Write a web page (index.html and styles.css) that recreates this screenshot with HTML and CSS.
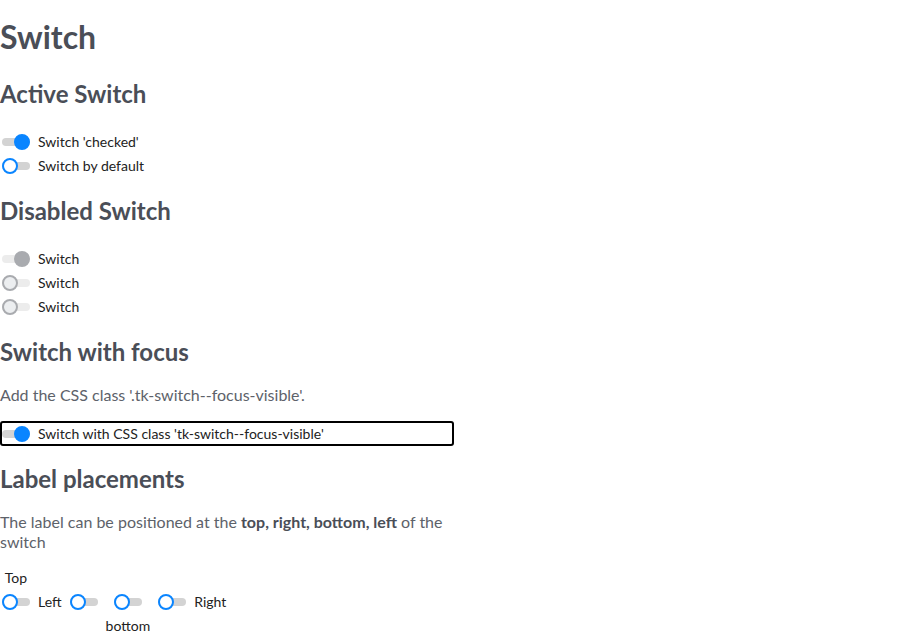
FILE: index.html
```html
<!DOCTYPE html>
<html lang="en">
<head>
<meta charset="utf-8">
<title>Switch</title>
<link rel="stylesheet" href="styles.css">
</head>
<body>
<main class="page">
  <h1 class="title">Switch</h1>

  <h2 class="section-title">Active Switch</h2>
  <div class="switch-list">
    <label class="switch-row">
      <span class="switch switch--checked"><span class="switch__track"></span><span class="switch__thumb"></span></span>
      <span class="switch__label">Switch 'checked'</span>
    </label>
    <label class="switch-row">
      <span class="switch"><span class="switch__track"></span><span class="switch__thumb"></span></span>
      <span class="switch__label">Switch by default</span>
    </label>
  </div>

  <h2 class="section-title">Disabled Switch</h2>
  <div class="switch-list">
    <label class="switch-row">
      <span class="switch switch--checked switch--disabled"><span class="switch__track"></span><span class="switch__thumb"></span></span>
      <span class="switch__label">Switch</span>
    </label>
    <label class="switch-row">
      <span class="switch switch--disabled"><span class="switch__track"></span><span class="switch__thumb"></span></span>
      <span class="switch__label">Switch</span>
    </label>
    <label class="switch-row">
      <span class="switch switch--disabled"><span class="switch__track"></span><span class="switch__thumb"></span></span>
      <span class="switch__label">Switch</span>
    </label>
  </div>

  <h2 class="section-title">Switch with focus</h2>
  <p class="text">Add the CSS class '.tk-switch--focus-visible'.</p>
  <label class="switch-row switch-row--focus">
    <span class="switch switch--checked"><span class="switch__track"></span><span class="switch__thumb"></span></span>
    <span class="switch__label">Switch with CSS class 'tk-switch--focus-visible'</span>
  </label>

  <h2 class="section-title">Label placements</h2>
  <p class="text text--wrap">The label can be positioned at the <strong>top, right, bottom, left</strong> of the switch</p>

  <div class="placements">
    <label class="placement placement--top">
      <span class="switch__label">Top</span>
      <span class="switch"><span class="switch__track"></span><span class="switch__thumb"></span></span>
    </label>
    <label class="placement placement--left">
      <span class="switch__label">Left</span>
      <span class="switch"><span class="switch__track"></span><span class="switch__thumb"></span></span>
    </label>
    <label class="placement placement--bottom">
      <span class="switch"><span class="switch__track"></span><span class="switch__thumb"></span></span>
      <span class="switch__label">bottom</span>
    </label>
    <label class="placement placement--right">
      <span class="switch"><span class="switch__track"></span><span class="switch__thumb"></span></span>
      <span class="switch__label">Right</span>
    </label>
  </div>
</main>
</body>
</html>
```

FILE: styles.css
```css
html, body {
  margin: 0;
  padding: 0;
  background: #ffffff;
}

body {
  font-family: Lato, "Open Sans", "Liberation Sans", sans-serif;
  color: #222222;
}

.page {
  width: 454px;
}

.title {
  margin: 18px 0 23px;
  font-size: 32px;
  line-height: 38px;
  font-weight: 700;
  color: #4a4e57;
}

.section-title {
  margin: 18px 0 22px;
  font-size: 24px;
  line-height: 29px;
  font-weight: 700;
  color: #4a4e57;
}

.text {
  margin: -3px 0 16px;
  font-size: 16px;
  line-height: 20px;
  color: #5d626a;
}

.text strong {
  font-weight: 700;
  color: #4a4e57;
}

.text--wrap {
  margin-bottom: 18px;
}

.switch-list {
  display: flex;
  flex-direction: column;
}

.switch-row {
  display: flex;
  align-items: center;
  gap: 6px;
  height: 24px;
}

.switch-row--focus {
  height: 25px;
  border-radius: 3px;
  box-shadow: inset 0 0 0 2px #000000;
}

.switch__label {
  font-size: 14px;
  line-height: 16px;
  color: #222222;
}

.switch {
  position: relative;
  display: block;
  flex: none;
  width: 32px;
  height: 16px;
}

.switch__track {
  position: absolute;
  left: 2px;
  right: 2px;
  top: 4px;
  height: 8px;
  border-radius: 4px;
  background: #d3d3d3;
}

.switch__thumb {
  position: absolute;
  top: 0;
  left: 2px;
  width: 16px;
  height: 16px;
  box-sizing: border-box;
  border-radius: 50%;
  background: #ffffff;
  border: 2px solid #0a85ff;
}

.switch--checked .switch__thumb {
  left: 14px;
  background: #0a85ff;
}

.switch--disabled .switch__track {
  background: #ececec;
}

.switch--disabled .switch__thumb {
  background: #eceef0;
  border-color: #a9abaf;
}

.switch--checked.switch--disabled .switch__thumb {
  background: #a9abaf;
}

.placements {
  display: flex;
  align-items: flex-start;
  gap: 6px;
}

.placement {
  display: flex;
  align-items: center;
  gap: 6px;
}

.placement--top,
.placement--bottom {
  flex-direction: column;
  gap: 8px;
}

.placement--left,
.placement--right,
.placement--bottom {
  margin-top: 24px;
}
```
